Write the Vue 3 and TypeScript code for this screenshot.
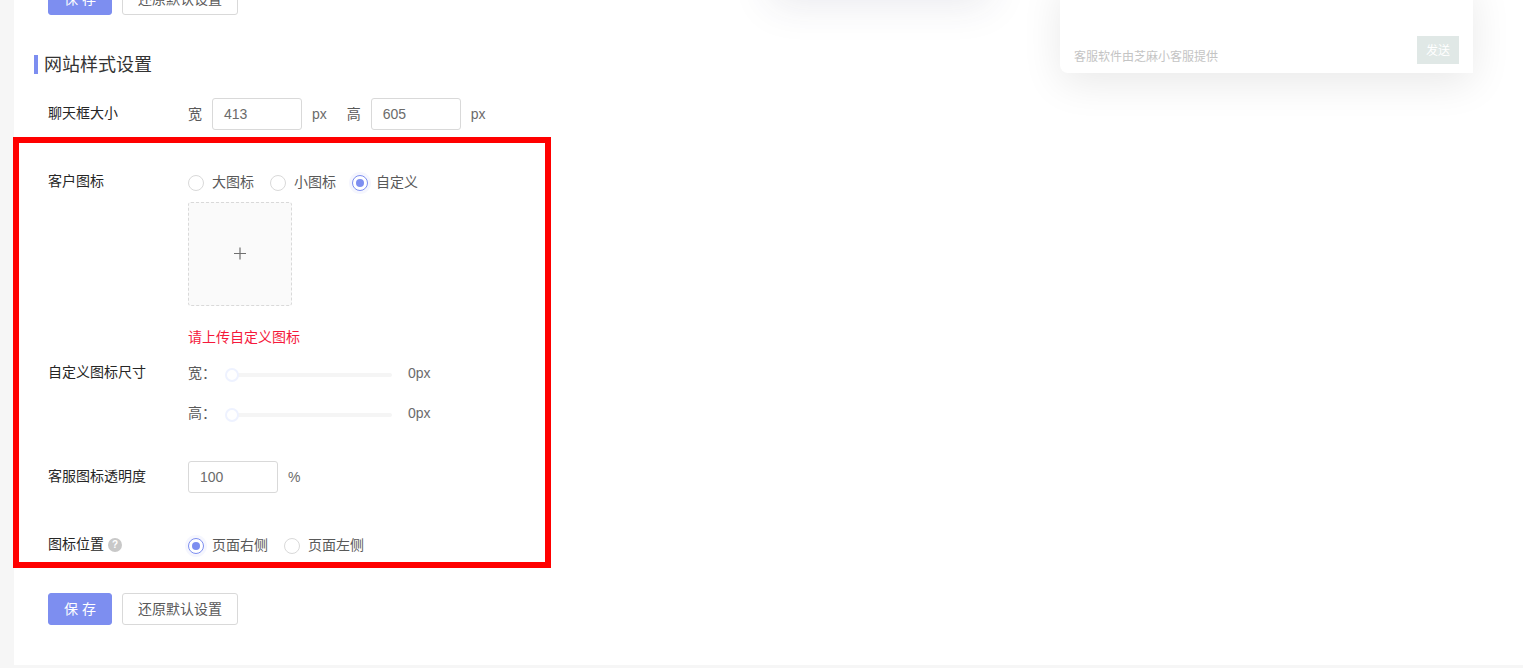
<script setup lang="ts">
interface RadioOption { label: string; checked: boolean }
interface SliderRow { label: string; value: string }

const iconOptions: RadioOption[] = [
  { label: '大图标', checked: false },
  { label: '小图标', checked: false },
  { label: '自定义', checked: true },
]
const sliders: SliderRow[] = [
  { label: '宽：', value: '0px' },
  { label: '高：', value: '0px' },
]
const positionOptions: RadioOption[] = [
  { label: '页面右侧', checked: true },
  { label: '页面左侧', checked: false },
]
</script>

<template>
  <div class="viewport">
    <main class="card">
      <div class="actions">
        <button class="btn primary">保 存</button>
        <button class="btn">还原默认设置</button>
      </div>

      <h2 class="section-title">网站样式设置</h2>

      <div class="row size-row">
        <div class="label">聊天框大小</div>
        <div class="inline">
          <span class="unit-before">宽</span>
          <div class="input">413</div>
          <span class="unit">px</span>
          <span class="unit-before second">高</span>
          <div class="input">605</div>
          <span class="unit">px</span>
        </div>
      </div>

      <div class="row icon-row">
        <div class="label raised">客户图标</div>
        <div>
          <div class="radios">
            <label v-for="o in iconOptions" :key="o.label" class="radio-item">
              <span class="radio" :class="{ checked: o.checked }"></span>
              <span>{{ o.label }}</span>
            </label>
          </div>
          <div class="upload">
            <svg width="14" height="14" viewBox="0 0 14 14" aria-hidden="true">
              <path d="M7 .5v12M1 6.5h12" stroke="#6f6f6f" stroke-width="1.2" fill="none" />
            </svg>
          </div>
          <div class="error">请上传自定义图标</div>
        </div>
      </div>

      <div class="row slider-block">
        <div class="label raised">自定义图标尺寸</div>
        <div class="sliders">
          <div v-for="s in sliders" :key="s.label" class="slider-row">
            <span class="slider-label">{{ s.label }}</span>
            <div class="track"><span class="handle"></span></div>
            <span class="slider-value">{{ s.value }}</span>
          </div>
        </div>
      </div>

      <div class="row opacity-row">
        <div class="label">客服图标透明度</div>
        <div class="inline">
          <div class="input">100</div>
          <span class="unit">%</span>
        </div>
      </div>

      <div class="row position-row">
        <div class="label raised with-help">图标位置<span class="help">?</span></div>
        <div class="radios">
          <label v-for="o in positionOptions" :key="o.label" class="radio-item">
            <span class="radio" :class="{ checked: o.checked }"></span>
            <span>{{ o.label }}</span>
          </label>
        </div>
      </div>

      <div class="actions bottom">
        <button class="btn primary">保 存</button>
        <button class="btn">还原默认设置</button>
      </div>
    </main>

    <div class="ghost-shadow"></div>
    <aside class="chat-preview">
      <span class="powered">客服软件由芝麻小客服提供</span>
      <span class="send">发送</span>
    </aside>
    <div class="annotation"></div>
  </div>
</template>

<style>
html, body { margin: 0; background: #f6f6f6; }
</style>

<style scoped>
.viewport {
  position: relative;
  height: 668px;
  overflow: hidden;
  font-family: "Liberation Sans", "Noto Sans CJK SC", sans-serif;
  font-size: 14px;
  line-height: 20px;
  color: #595959;
}
.card {
  margin: -17px 0 0 14px;
  padding: 0 0 40px 34px;
  background: #fff;
}
.actions { display: flex; gap: 10px; }
.actions.bottom { margin-top: 38px; }
.btn {
  box-sizing: border-box;
  height: 32px;
  padding: 0 15px;
  border: 1px solid #d9d9d9;
  border-radius: 3px;
  background: #fff;
  color: #595959;
  font: inherit;
}
.btn.primary {
  width: 64px;
  padding: 0;
  border-color: #7d8ef0;
  background: #7d8ef0;
  color: #fff;
}
.section-title {
  position: relative;
  margin: 40px 0 0 -14px;
  padding: 1px 0 0 10px;
  font-size: 18px;
  line-height: 19px;
  font-weight: 400;
  color: #333;
}
.section-title::before {
  content: "";
  position: absolute;
  left: 0;
  top: 0;
  width: 4px;
  height: 19px;
  background: #7d8ef0;
}
.row { display: grid; grid-template-columns: 140px 1fr; }
.label { color: #262626; }
.label.raised { margin-top: -1px; }
.size-row { margin-top: 23px; }
.size-row .label, .opacity-row .label { line-height: 30px; }
.icon-row { margin-top: 42px; }
.inline { display: flex; align-items: center; }
.unit-before { margin-right: 10px; }
.unit-before.second { margin-left: 20px; }
.input {
  box-sizing: border-box;
  width: 90px;
  height: 32px;
  padding: 0 11px;
  border: 1px solid #d9d9d9;
  border-radius: 3px;
  line-height: 30px;
  color: #6b6b6b;
}
.unit { margin-left: 10px; color: #6b6b6b; }
.radios { display: flex; gap: 16px; height: 20px; }
.radio-item { display: flex; align-items: center; gap: 8px; }
.radio {
  box-sizing: border-box;
  position: relative;
  width: 16px;
  height: 16px;
  margin-top: 2px;
  border: 1px solid #d9d9d9;
  border-radius: 50%;
  background: #fff;
}
.radio.checked {
  border-color: #7d8ef0;
  box-shadow: 0 0 0 3px rgba(125, 142, 240, 0.08);
}
.radio.checked::after {
  content: "";
  position: absolute;
  left: 3px;
  top: 3px;
  width: 8px;
  height: 8px;
  border-radius: 50%;
  background: #7d8ef0;
}
.upload {
  box-sizing: border-box;
  display: flex;
  align-items: center;
  justify-content: center;
  width: 104px;
  height: 104px;
  margin-top: 10px;
  border: 1px dashed #d9d9d9;
  border-radius: 3px;
  background: #fafafa;
}
.error { margin-top: 21px; color: #f5193c; }
.slider-block { margin-top: 16px; }
.sliders { display: flex; flex-direction: column; gap: 20px; }
.slider-row { display: flex; align-items: center; height: 20px; }
.slider-label { width: 44px; flex: none; }
.track {
  position: relative;
  width: 160px;
  height: 4px;
  margin-top: 4px;
  border-radius: 2px;
  background: #f5f5f5;
}
.handle {
  box-sizing: border-box;
  position: absolute;
  left: -7px;
  top: -5px;
  width: 14px;
  height: 14px;
  border: 2px solid #eef2ff;
  border-radius: 50%;
  background: #fff;
}
.slider-value { margin-left: 16px; color: #6b6b6b; }
.opacity-row { margin-top: 38px; }
.position-row { margin-top: 42px; height: 20px; }
.label.with-help { display: flex; align-items: center; height: 20px; }
.help {
  width: 14px;
  height: 14px;
  margin: 2px 0 0 4px;
  border-radius: 50%;
  background: #c8c8c8;
  color: #fff;
  font-size: 10px;
  font-weight: 700;
  line-height: 14px;
  text-align: center;
}
.ghost-shadow {
  position: absolute;
  left: 770px;
  top: -80px;
  width: 220px;
  height: 75px;
  border-radius: 8px;
  box-shadow: 0 10px 40px rgba(50, 50, 90, 0.1);
}
.chat-preview {
  position: absolute;
  left: 1060px;
  top: -20px;
  width: 413px;
  height: 93px;
  border-bottom-left-radius: 8px;
  background: #fff;
  box-shadow: 0 10px 40px rgba(0, 0, 0, 0.09);
}
.powered {
  position: absolute;
  left: 14px;
  bottom: 6px;
  font-size: 12px;
  color: #c4c4c4;
}
.send {
  position: absolute;
  right: 14px;
  bottom: 9px;
  width: 42px;
  height: 28px;
  background: #e0e8e6;
  color: #fff;
  font-size: 12px;
  line-height: 30px;
  text-align: center;
}
.annotation {
  box-sizing: border-box;
  position: absolute;
  left: 13px;
  top: 137px;
  width: 538px;
  height: 431px;
  border: 6px solid #ff0000;
}
</style>
